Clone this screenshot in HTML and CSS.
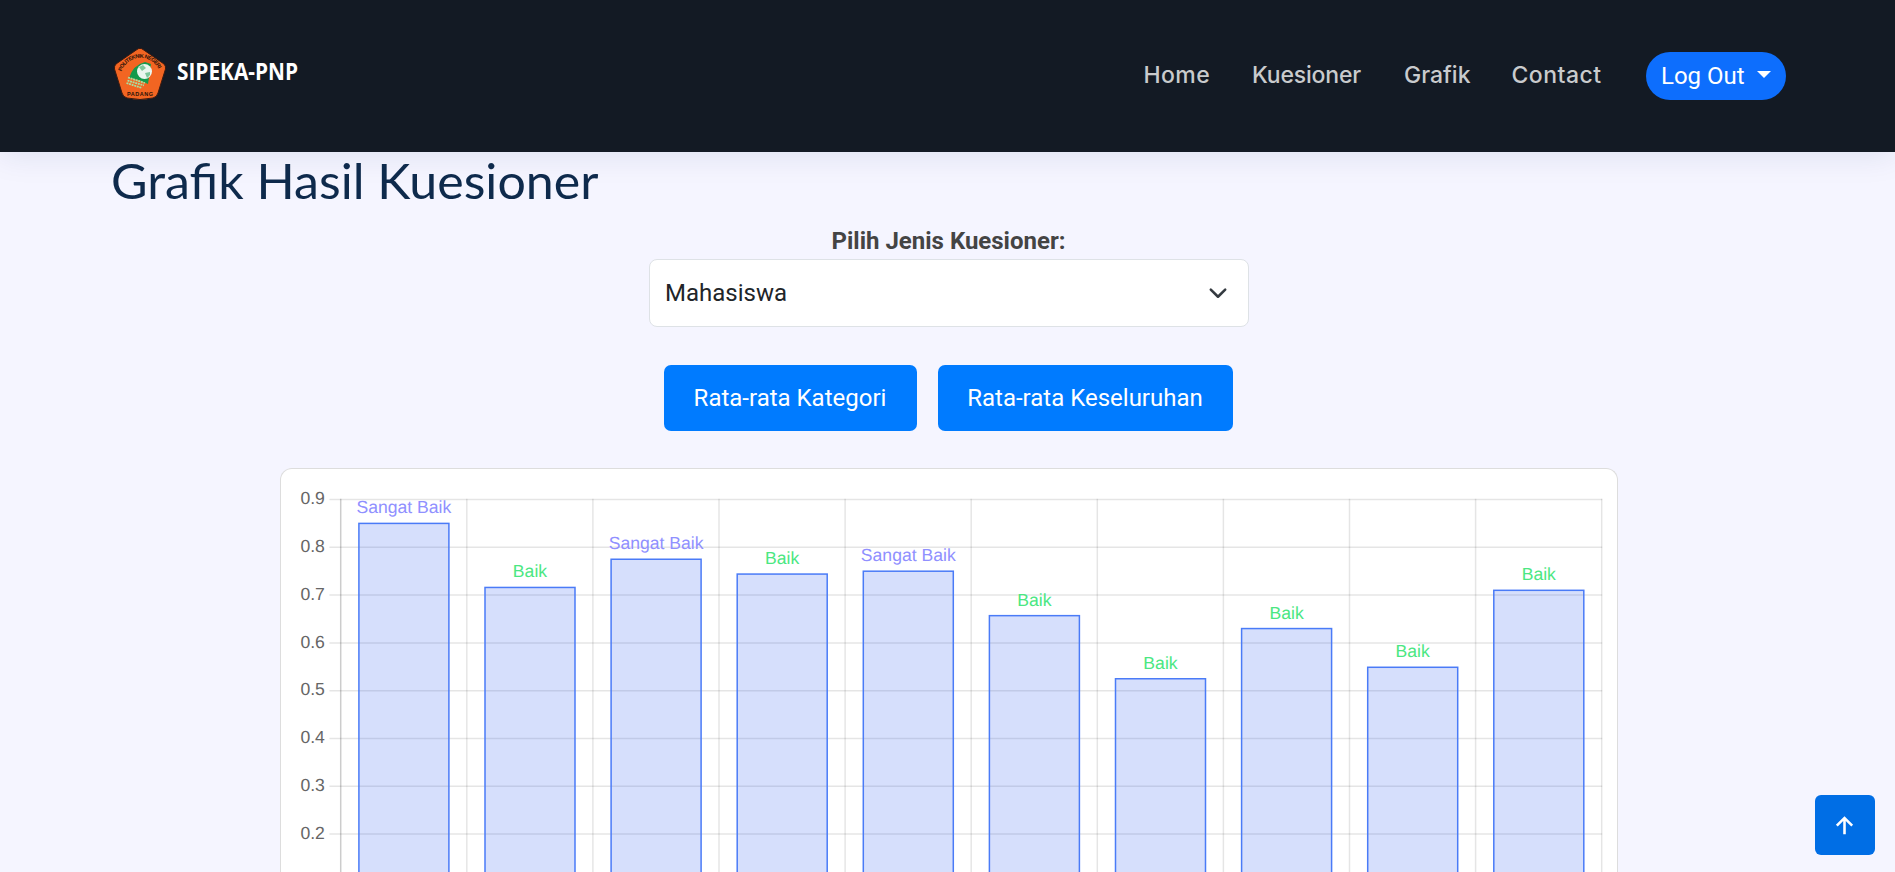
FILE: index.html
```html
<!DOCTYPE html>
<html lang="id">
<head>
<meta charset="utf-8">
<title>Grafik Hasil Kuesioner</title>
<link rel="stylesheet" href="styles.css">
</head>
<body>
<header class="header">
  <a class="brand">
    <svg class="brand-logo" width="54" height="54" viewBox="0 0 54 54">
      <path d="M27 1.500Q28 1 30 2.500L51 17Q53 19 52.500 22L45 46Q44 50 40 51Q27 54 14 51Q10 50 9 46L1.500 22Q1 19 3 17L24 2.500Q26 1 27 1.500Z" fill="#f26522" stroke="#3b1a10" stroke-width="1"/>
      <defs><path id="arc" d="M8.500 24.500A20 20 0 0 1 46.500 24.500"/></defs>
      <text class="seal-text"><textPath href="#arc" textLength="47">POLITEKNIK NEGERI</textPath></text>
      <path d="M16 31Q20 18 32 15L38 17L35 37Q25 32 16 31Z" fill="#149a4b"/>
      <circle cx="31.500" cy="24.500" r="7.500" fill="#eaf6ee"/>
      <path d="M26 20l4-2 3 3-4 3zM32 26l5-1 0 3-3 3z" fill="#7cc79a"/>
      <path d="M15 30.500L32 36M14.500 33.500L31 38.500M13.500 36L29 41" stroke="#a9e0a0" stroke-width="1.800" stroke-dasharray="2 .7"/>
      <text class="seal-text" x="14" y="48.500" textLength="26">PADANG</text>
    </svg>
    <svg class="brand-name" width="124" height="34" viewBox="0 0 124 34"><text x="1" y="24" textLength="121" lengthAdjust="spacingAndGlyphs">SIPEKA-PNP</text></svg>
  </a>
  <nav class="nav">
    <a class="link home">Home</a>
    <a class="link kues">Kuesioner</a>
    <a class="link graf">Grafik</a>
    <a class="link cont">Contact</a>
    <button class="logout">Log Out<span class="caret"></span></button>
  </nav>
</header>
<main class="main">
  <h2 class="title">Grafik Hasil Kuesioner</h2>
  <section class="picker">
    <label class="picker-label">Pilih Jenis Kuesioner:</label>
    <div class="select">Mahasiswa
      <svg width="24" height="24" viewBox="0 0 16 16" fill="none" stroke="#343a40" stroke-width="1.700" stroke-linecap="round" stroke-linejoin="round"><path d="m3.200 5.700 4.800 4.800 4.800-4.800"/></svg>
    </div>
    <div class="actions"><button class="btn kategori">Rata-rata Kategori</button><button class="btn keseluruhan">Rata-rata Keseluruhan</button></div>
  </section>
  <section class="card"><svg id="chart" class="chart" width="1336" height="403" viewBox="281.1 468.4 1336 403"></svg></section>
</main>
<a class="to-top"><svg class="arrow" width="31" height="31" viewBox="0 0 24 24" fill="#fff"><path d="M11 7.828V18h2V7.828l4.243 4.243 1.414-1.414L12 4l-6.657 6.657 1.414 1.414z"/></svg></a>
<script src="chart.js"></script>
</body>
</html>
```
FILE: styles.css
```css
* { box-sizing: border-box; }
body { margin: 0; height: 872px; overflow: hidden; background: #f5f5ff; font-family: Roboto, sans-serif; font-size: 24px; color: #444; }
.header { position: relative; height: 152px; padding: 0 109px 3px 113px; display: flex; align-items: center; justify-content: space-between; background: #131a24; box-shadow: 0 3px 30px rgba(1, 41, 112, .1); }
.brand { display: flex; align-items: center; gap: 9px; }
.brand-logo { display: block; margin-top: -2px; }
.brand-name { display: block; margin-top: -4px; overflow: visible; }
.brand-name text { font: 700 23px "Open Sans", sans-serif; fill: #fff; }
.seal-text { font: 700 5.500px "Liberation Sans", sans-serif; fill: #2a1208; }
.nav { display: flex; align-items: center; gap: 42px; }
.link { font: 500 23px/36px Inter, sans-serif; color: #c9cbcd; white-space: nowrap; }
.home { width: 66.5px; letter-spacing: .4px; }
.kues { width: 110px; letter-spacing: -.2px; }
.graf { width: 65.5px; letter-spacing: 0; }
.cont { width: 92.5px; letter-spacing: .5px; }
.logout { width: 140px; height: 48px; margin: 3px 0 0; padding: 0 15px; display: flex; align-items: center; justify-content: space-between; border: 0; border-radius: 24px; background: #0d6efd; color: #fff; font: 400 24px Roboto, sans-serif; }
.caret { border: 7px solid transparent; border-top-color: #fff; border-bottom: 0; margin-top: -4px; }
.main { display: flex; flex-direction: column; align-items: center; }
.title { align-self: flex-start; margin: 0 0 0 111px; height: 71px; font: 400 48px/58px Lato, sans-serif; color: #0e2a4c; transform: scaleX(1.044); transform-origin: left; }
.picker { display: flex; flex-direction: column; align-items: center; padding-left: 3px; }
.picker-label { height: 36px; line-height: 36px; font-weight: 700; margin-right: 1px; }
.select { width: 600px; height: 68px; display: flex; align-items: center; justify-content: space-between; padding: 0 18px 0 15px; border: 1px solid #dee2e6; border-radius: 8px; background: #fff; color: #212529; }
.actions { display: flex; gap: 21px; margin: 38px 2px 37px 0; }
.btn { height: 66px; padding: 0; border: 0; border-radius: 7px; background: #007bff; color: #fff; font: 400 24px Roboto, sans-serif; }
.kategori { width: 253px; }
.keseluruhan { width: 295px; }
.card { width: 1338px; height: 404px; margin-left: 3px; border: 1px solid #ddd; border-bottom: 0; border-radius: 12px 12px 0 0; background: #fff; flex: none; }
.chart { display: block; }
.chart text { font: 17.600px "Liberation Sans", Arial, sans-serif; text-rendering: geometricPrecision; }
.tick { fill: #666; text-anchor: end; }
.grid { stroke: rgba(0, 0, 0, .1); stroke-width: 1.500; }
.axis { stroke: rgba(0, 0, 0, .2); stroke-width: 1.500; }
.bar { fill: rgba(50, 95, 240, .2); stroke: #4a7bf7; stroke-width: 1.500; }
.baik, .sangat { text-anchor: middle; }
.baik { fill: #4be782; }
.sangat { fill: #9090ff; }
.to-top { position: fixed; right: 20px; bottom: 17px; width: 60px; height: 60px; display: flex; align-items: center; justify-content: center; border-radius: 6px; background: #006ee5; }
.arrow { margin: 3px 1px 0 0; }
```
FILE: chart.js
```js
const chart = document.getElementById('chart');
const left = 340.8, step = 126.1, zero = 929.1, unit = 478;
const bars = [
  [0.85, 'Sangat Baik'], [0.716, 'Baik'], [0.775, 'Sangat Baik'], [0.744, 'Baik'], [0.75, 'Sangat Baik'],
  [0.657, 'Baik'], [0.525, 'Baik'], [0.63, 'Baik'], [0.549, 'Baik'], [0.71, 'Baik']
];
let out = '';
for (let i = 2; i <= 9; i++) {
  const y = zero - i * unit / 10;
  out += `<line class="grid" x1="329.5" x2="1602.3" y1="${y}" y2="${y}"/>`;
  out += `<text class="tick" x="325" y="${y + 4.8}">${(i / 10).toFixed(1)}</text>`;
}
for (let i = 0; i <= 10; i++) {
  const x = left + i * step;
  out += `<line class="${i ? 'grid' : 'axis'}" x1="${x}" x2="${x}" y1="498.2" y2="940"/>`;
}
bars.forEach(([value, label], i) => {
  const x = left + i * step + 18.2, y = zero - value * unit;
  out += `<rect class="bar" x="${x}" y="${y}" width="90" height="${zero - y}"/>`;
  out += `<text class="${label === 'Baik' ? 'baik' : 'sangat'}" x="${x + 45}" y="${y - 10}">${label}</text>`;
});
chart.innerHTML = out;
```
